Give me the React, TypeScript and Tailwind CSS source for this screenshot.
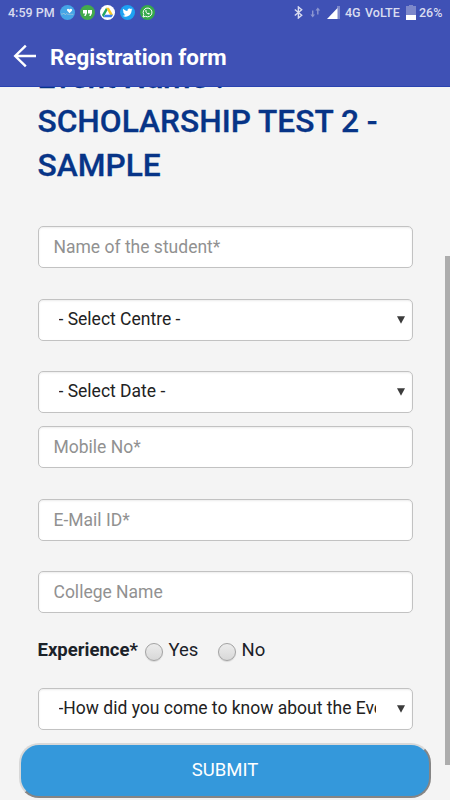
import React from "react";

const fieldBox =
  "flex h-[42px] w-[375px] shrink-0 items-center rounded-[5px] border-[1.5px] border-[#c2c2c2] bg-white shadow-[inset_0_1px_2px_rgba(0,0,0,0.08)]";

function TextField({ label, className }: { label: string; className: string }) {
  return (
    <input
      type="text"
      placeholder={label}
      className={`${fieldBox} px-[15px] text-[17.5px] outline-none placeholder:text-[#919191] placeholder:opacity-100 ${className}`}
    />
  );
}

function SelectField({ label, className }: { label: string; className: string }) {
  return (
    <button type="button" className={`${fieldBox} text-left text-[17.5px] text-[#222] ${className}`}>
      <span className="ml-[20px] w-[317px] overflow-hidden pb-px whitespace-nowrap">{label}</span>
      <svg viewBox="0 0 8 8" className="ml-[21px] h-[8px] w-[8px] shrink-0" fill="#3c3c3c">
        <path d="M0 0.3H8L4 7.7Z" />
      </svg>
    </button>
  );
}

function Radio() {
  return (
    <span className="mt-[5px] h-[18px] w-[18px] shrink-0 rounded-full border border-[#a2a2a2] bg-linear-to-b from-[#ececec] to-[#d8d8d8] shadow-[0_1px_1px_rgba(0,0,0,0.12)]" />
  );
}

function NotificationIcons() {
  return (
    <div className="ml-[6px] flex gap-[5px]">
      <svg viewBox="0 0 15 15" className="h-[15px] w-[15px]">
        <circle cx="7.5" cy="7.5" r="7.5" fill="#45a5e6" />
        <path d="M9.6 8.2 7.2 5.7C6.2 4.2 8.2 3.1 9.4 4.5C10.7 3 12.8 4.1 11.9 5.8Z" fill="#fff" />
        <path d="M1 9h2l1-1 1.3 2 1.2-1.5 1.2.8h5.7" fill="none" stroke="#a9c8d7" strokeWidth=".7" />
      </svg>
      <svg viewBox="0 0 15 15" className="h-[15px] w-[15px]">
        <circle cx="7.5" cy="7.5" r="7.5" fill="#43a94b" />
        <path d="M3 5h4v3.3L5.6 11H4.2l1-2.5H3ZM8 5h4v3.3L10.6 11H9.2l1-2.5H8Z" fill="#fff" />
      </svg>
      <svg viewBox="0 0 15 15" className="h-[15px] w-[15px]">
        <circle cx="7.5" cy="7.5" r="7.5" fill="#fff" />
        <path d="M6.1 2.8 1.9 10l1.6 2.2 4.1-7.1Z" fill="#24a464" />
        <path d="M6.1 2.8h2.8l4.2 7.2h-3Z" fill="#f8c926" />
        <path d="M5.1 9.7h8l-1.6 2.5H3.5Z" fill="#3981ed" />
      </svg>
      <svg viewBox="0 0 15 15" className="h-[15px] w-[15px]">
        <circle cx="7.5" cy="7.5" r="7.5" fill="#1da1f2" />
        <path
          transform="translate(2.5 2.5) scale(.42)"
          d="M23.95 4.57a10 10 0 0 1-2.82.77 4.96 4.96 0 0 0 2.16-2.72c-.95.55-2 .96-3.12 1.19a4.92 4.92 0 0 0-8.38 4.48C7.69 8.09 4.07 6.13 1.64 3.16a4.92 4.92 0 0 0 1.52 6.57 4.9 4.9 0 0 1-2.23-.61v.06a4.92 4.92 0 0 0 3.95 4.83 5 5 0 0 1-2.21.08 4.94 4.94 0 0 0 4.6 3.42A9.87 9.87 0 0 1 0 19.54a14 14 0 0 0 7.55 2.21c9.05 0 14-7.5 14-13.98v-.64a9.94 9.94 0 0 0 2.4-2.56Z"
          fill="#fff"
        />
      </svg>
      <svg viewBox="0 0 15 15" className="h-[15px] w-[15px]">
        <circle cx="7.5" cy="7.5" r="7.5" fill="#36a94a" />
        <path d="M3 12l.7-2.5A4.4 4.4 0 1 1 5.5 11.3Z" fill="none" stroke="#fff" strokeWidth="1" />
        <path d="M5.4 5.3c.6-.7 1-.4 1.4.8l-.5.6c.4.8.9 1.3 1.7 1.6l.6-.6c1.3.5 1.5.8.8 1.5-1.3 1-4.7-2-4-3.9Z" fill="#fff" />
      </svg>
    </div>
  );
}

function StatusBar() {
  return (
    <div className="flex h-[25px] items-center pl-[8px] text-[12.5px] font-medium text-[#d9dcf0]">
      <span className="w-[46px] pt-px whitespace-nowrap">4:59 PM</span>
      <NotificationIcons />
      <svg viewBox="0 0 9 13" className="ml-[139px] h-[13px] w-[9px]" fill="none" stroke="#d9dcf0" strokeWidth="1.4">
        <path d="M.8 3.5 7.7 9.3 4.4 12V1l3.3 2.8L.8 9.5" />
      </svg>
      <svg viewBox="0 0 11 11" className="ml-[7px] h-[11px] w-[11px]" fill="#8c96d1">
        <path d="M2 3.5h1.4v4H5L2.7 10.5.4 7.5H2ZM7.1 7.5h1.4v-4h1.7L7.8.5 5.5 3.5h1.6Z" />
      </svg>
      <svg viewBox="0 0 13 13" className="ml-[6px] h-[13px] w-[13px]">
        <path d="M10 0h3v13h-3Z" fill="#7d88ca" />
        <path d="M10.5 2V13H0Z" fill="#fff" />
      </svg>
      <span className="ml-[5px] w-[20px] pt-px whitespace-nowrap">4G</span>
      <span className="w-[36px] pt-px whitespace-nowrap">VoLTE</span>
      <svg viewBox="0 0 10 15" className="ml-[5px] h-[15px] w-[10px]">
        <path d="M3 0h4v1h3v9H0V1h3Z" fill="#7d88ca" />
        <path d="M0 10h10v5H0Z" fill="#fff" />
      </svg>
      <span className="ml-[3px] pt-px whitespace-nowrap">26%</span>
    </div>
  );
}

export default function App() {
  return (
    <div className="flex h-[800px] w-[450px] flex-col overflow-hidden bg-[#f4f4f4] font-['Roboto',sans-serif]">
      <header className="h-[87px] shrink-0 border-b border-[#2a43b0] bg-[#3f51b5]">
        <StatusBar />
        <div className="flex h-[61px] items-center pl-[13px]">
          <svg viewBox="0 0 24 24" className="h-[24px] w-[24px]" fill="none" stroke="#fff" strokeWidth="2.4">
            <path d="M12.8 1.7 2.2 12l10.6 10.3M2.2 12H23" />
          </svg>
          <h1 className="mt-[2px] ml-[13px] text-[22.4px] leading-[30px] font-bold whitespace-nowrap text-white">Registration form</h1>
        </div>
      </header>
      <div className="flex min-h-0 flex-1 overflow-hidden">
        <main className="w-[445px] shrink-0 pl-[37.5px]">
          <div className="flex h-[101px] flex-col justify-end overflow-hidden">
            <h2 className="text-[31.7px] leading-[44px] font-medium whitespace-nowrap text-[#073487] [-webkit-text-stroke:0.3px_#073487]">
              Event Name :<br />
              SCHOLARSHIP TEST 2 -<br />
              SAMPLE
            </h2>
          </div>
          <form className="flex flex-col">
            <TextField label="Name of the student*" className="mt-[38px]" />
            <SelectField label="- Select Centre -" className="mt-[31px]" />
            <SelectField label="- Select Date -" className="mt-[30px]" />
            <TextField label="Mobile No*" className="mt-[13px]" />
            <TextField label="E-Mail ID*" className="mt-[31px]" />
            <TextField label="College Name" className="mt-[30px]" />
            <div className="mt-[23px] flex h-[26px] items-center text-[18.5px] text-[#1b2229]">
              <span className="w-[107px] pt-[4px] font-bold whitespace-nowrap">Experience*</span>
              <Radio />
              <span className="ml-[6px] w-[49px] pt-[4px]">Yes</span>
              <Radio />
              <span className="ml-[6px] pt-[4px]">No</span>
            </div>
            <SelectField label="-How did you come to know about the Event-" className="mt-[26px]" />
            <button
              type="button"
              className="mt-[13px] -ml-[18.5px] h-[55px] w-[412px] rounded-[20px] border-[2.5px] border-t-[#d8d8d8] border-r-[#858585] border-b-[#858585] border-l-[#d8d8d8] bg-[#3498db] text-[18.5px] text-white"
            >
              SUBMIT
            </button>
          </form>
        </main>
        <div className="mt-[169px] h-[509px] w-[5px] shrink-0 bg-[#adadad]" />
      </div>
    </div>
  );
}
